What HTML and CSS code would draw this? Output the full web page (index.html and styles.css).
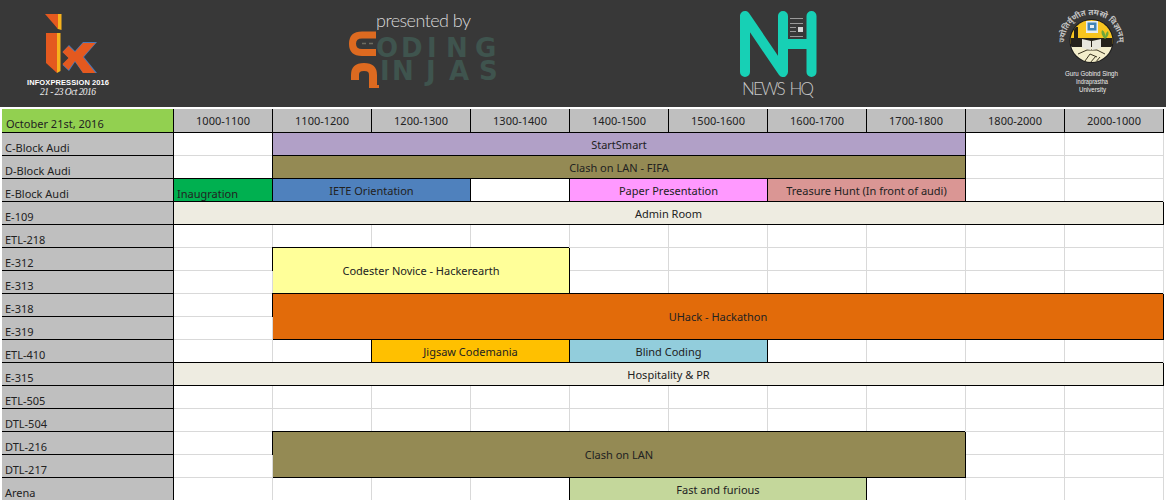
FILE: index.html
```html
<!DOCTYPE html>
<html lang="en">
<head>
    <meta charset="UTF-8">
    <meta name="viewport" content="width=device-width, initial-scale=1.0">
    <title>Infoxpression 2016 Schedule</title>
    <link rel="stylesheet" href="styles.css">
</head>
<body>

    <!-- Sponsor logos -->
    <header class="logo-bar">
        <svg class="logo logo-ix" viewBox="26 0 84 107" role="img" aria-label="Infoxpression">
            <polygon class="ix-gold" points="48,14 61.500,14 61.500,30 58,29"/>
            <polygon class="ix-orange" points="45,14 58,14 58,29"/>
            <polygon class="ix-gold" points="57,33 60.500,33 60.500,71 57,73"/>
            <polygon class="ix-orange" points="46,33 57,33 57,73 46,63"/>
            <polygon class="ix-blue" points="83,42 97,42 84,57 97,73 83,73 75,62 69,71 62.500,65 69,58 62.500,52 69,45 75,51"/>
            <polygon class="ix-orange" points="83,43 95.500,43 83,57 95.500,73 83,73 75,61 68.500,70 62.500,64 68.500,58 62.500,52 68.500,46 75,52"/>
            <text class="ix-title" x="27" y="85" textLength="82">INFOXPRESSION 2016</text>
            <text class="ix-date" x="40" y="95" textLength="56">21 - 23 Oct 2016</text>
        </svg>

        <svg class="logo logo-cn" viewBox="349 0 152 107" role="img" aria-label="Coding Ninjas">
            <text class="cn-by" x="377" y="27" textLength="95">presented by</text>
            <path class="cn-hook" d="M377 35 H363 Q353.500 35 353.500 43.750 Q353.500 52.500 363 52.500 H377"/>
            <path class="cn-eyes" d="M363 43.500 H367 M370 43.500 H374"/>
            <path class="cn-hook wide" d="M356 80 V75 Q356 67 365 67 Q374 67 374 75 V87"/>
            <rect class="cn-foot" x="370" y="85" width="10" height="3"/>
            <text class="cn-word" x="377 402 428 447 476" y="57">ODING</text>
            <text class="cn-word" x="381 393 427 450 480" y="80">INJAS</text>
        </svg>

        <svg class="logo logo-nh" viewBox="740 0 82 107" role="img" aria-label="News HQ">
            <path class="nh-stroke" d="M747 16 V72 M747 16 L785 72 V16 M813.500 16 V72 M785 44 H813.500"/>
            <path class="nh-lines" d="M792 18.500 H805 M792 23.500 H805 M792 27.500 H798 M792 31.500 H798 M792 36.500 H805"/>
            <rect class="nh-photo" x="800" y="27" width="5" height="5"/>
            <text class="nh-name" x="744" y="95" textLength="72">NEWS HQ</text>
        </svg>

        <svg class="logo logo-ipu" viewBox="1058 0 66 107" role="img" aria-label="Guru Gobind Singh Indraprastha University">
            <defs>
                <clipPath id="sealClip"><circle cx="1091.500" cy="41" r="21"/></clipPath>
                <path id="mottoArc" d="M1065 47 A27 27 0 1 1 1118 47"/>
            </defs>
            <text class="ipu-motto"><textPath href="#mottoArc" startOffset="50%">ज्योतिर्वृणीत तमसो विज्ञानम्</textPath></text>
            <circle cx="1091.500" cy="41" r="22" class="ipu-edge"/>
            <g clip-path="url(#sealClip)">
                <rect class="ipu-yellow" x="1068" y="18" width="47" height="26"/>
                <rect class="ipu-cream" x="1068" y="46" width="47" height="18"/>
                <rect class="ipu-black" x="1068" y="38" width="47" height="9"/>
                <rect class="ipu-black" x="1074" y="27" width="4" height="12"/>
                <path class="ipu-leaf" d="M1105 39 Q1100 34 1102 30 Q1106 32 1105 39 Q1105 33 1108 31 Q1110 35 1105 39 Z"/>
                <path class="ipu-hands" d="M1078 54 L1087 50 L1097 50 L1105 54 M1085 61 L1090 54 L1097 57 M1090 63 L1096 56 M1095 63 L1100 57"/>
            </g>
            <rect class="ipu-white" x="1086" y="21" width="12" height="12"/>
            <rect class="ipu-screen" x="1087.500" y="22.500" width="9" height="8"/>
            <rect class="ipu-white" x="1090" y="25" width="4" height="3"/>
            <path class="ipu-book" d="M1082 39 L1091 41 V50 L1082 48 Z M1092 41 L1101 39 V48 L1092 50 Z"/>
            <text class="ipu-name" x="1065" y="76" textLength="53" lengthAdjust="spacingAndGlyphs">Guru Gobind Singh</text>
            <text class="ipu-name" x="1076" y="84" textLength="32" lengthAdjust="spacingAndGlyphs">Indraprastha</text>
            <text class="ipu-name" x="1079" y="92" textLength="27" lengthAdjust="spacingAndGlyphs">University</text>
        </svg>
    </header>

    <!-- Schedule sheet -->
    <main class="sheet">
        <div class="date-cell">October 21st, 2016</div>
        <div class="time-cell">1000-1100</div>
        <div class="time-cell">1100-1200</div>
        <div class="time-cell">1200-1300</div>
        <div class="time-cell">1300-1400</div>
        <div class="time-cell">1400-1500</div>
        <div class="time-cell">1500-1600</div>
        <div class="time-cell">1600-1700</div>
        <div class="time-cell">1700-1800</div>
        <div class="time-cell">1800-2000</div>
        <div class="time-cell">2000-1000</div>

        <div class="room">C-Block Audi</div>
        <div class="empty"></div>
        <div class="event cols-7 purple">StartSmart</div>
        <div class="empty"></div><div class="empty"></div>

        <div class="room">D-Block Audi</div>
        <div class="empty"></div>
        <div class="event cols-7 olive">Clash on LAN - FIFA</div>
        <div class="empty"></div><div class="empty"></div>

        <div class="room">E-Block Audi</div>
        <div class="event low green">Inaugration</div>
        <div class="event cols-2 blue">IETE Orientation</div>
        <div class="empty boxed"></div>
        <div class="event cols-2 pink">Paper Presentation</div>
        <div class="event cols-2 salmon">Treasure Hunt (In front of audi)</div>
        <div class="empty"></div><div class="empty"></div>

        <div class="room">E-109</div>
        <div class="event cols-10 cream">Admin Room</div>

        <div class="room">ETL-218</div>
        <div class="empty"></div><div class="empty"></div><div class="empty"></div><div class="empty"></div><div class="empty"></div>
        <div class="empty"></div><div class="empty"></div><div class="empty"></div><div class="empty"></div><div class="empty"></div>

        <div class="room">E-312</div>
        <div class="empty"></div>
        <div class="event cols-3 rows-2 yellow">Codester Novice - Hackerearth</div>
        <div class="empty"></div><div class="empty"></div><div class="empty"></div><div class="empty"></div><div class="empty"></div><div class="empty"></div>

        <div class="room">E-313</div>
        <div class="empty"></div>
        <div class="empty"></div><div class="empty"></div><div class="empty"></div><div class="empty"></div><div class="empty"></div><div class="empty"></div>

        <div class="room">E-318</div>
        <div class="empty"></div>
        <div class="event cols-9 rows-2 orange">UHack - Hackathon</div>

        <div class="room">E-319</div>
        <div class="empty"></div>

        <div class="room">ETL-410</div>
        <div class="empty"></div><div class="empty"></div>
        <div class="event cols-2 gold">Jigsaw Codemania</div>
        <div class="event cols-2 sky">Blind Coding</div>
        <div class="empty"></div><div class="empty"></div><div class="empty"></div><div class="empty"></div>

        <div class="room">E-315</div>
        <div class="event cols-10 cream">Hospitality &amp; PR</div>

        <div class="room">ETL-505</div>
        <div class="empty"></div><div class="empty"></div><div class="empty"></div><div class="empty"></div><div class="empty"></div>
        <div class="empty"></div><div class="empty"></div><div class="empty"></div><div class="empty"></div><div class="empty"></div>

        <div class="room">DTL-504</div>
        <div class="empty"></div><div class="empty"></div><div class="empty"></div><div class="empty"></div><div class="empty"></div>
        <div class="empty"></div><div class="empty"></div><div class="empty"></div><div class="empty"></div><div class="empty"></div>

        <div class="room">DTL-216</div>
        <div class="empty"></div>
        <div class="event cols-7 rows-2 olive">Clash on LAN</div>
        <div class="empty"></div><div class="empty"></div>

        <div class="room">DTL-217</div>
        <div class="empty"></div>
        <div class="empty"></div><div class="empty"></div>

        <div class="room">Arena</div>
        <div class="empty"></div><div class="empty"></div><div class="empty"></div><div class="empty"></div>
        <div class="event cols-3 leaf">Fast and furious</div>
        <div class="empty"></div><div class="empty"></div><div class="empty"></div>
    </main>

</body>
</html>
```

FILE: styles.css
```css
body {
    margin: 0;
    height: 500px;
    overflow: hidden;
    background-color: #fff;
    font-family: "Noto Sans", Arial, sans-serif;
    font-size: 11px;
    color: #222;
}

/* Logo bar */
.logo-bar {
    display: flex;
    justify-content: space-between;
    height: 107px;
    padding: 0 42px 0 26px;
    background-color: #383838;
}

.logo {
    display: block;
    height: 107px;
}

.logo-ix { width: 84px; }
.logo-cn { width: 152px; }
.logo-nh { width: 82px; }
.logo-ipu { width: 66px; }

.ix-orange { fill: #e4591f; }
.ix-gold { fill: #f7b21c; }
.ix-blue { fill: #4a78b8; }

.ix-title {
    fill: #fff;
    font-family: "Liberation Sans", sans-serif;
    font-size: 7.5px;
    font-weight: bold;
}

.ix-date {
    fill: #eee;
    font-family: "Liberation Serif", serif;
    font-size: 9.5px;
    font-style: italic;
}

.cn-by {
    fill: #d8d8d8;
    font-family: Lato, sans-serif;
    font-size: 18px;
    font-weight: 300;
}

.cn-hook {
    fill: none;
    stroke: #dd6a20;
    stroke-width: 7;
}

.cn-hook.wide { stroke-width: 8; }

.cn-eyes {
    fill: none;
    stroke: #6d6d62;
    stroke-width: 1.5;
}

.cn-foot { fill: #dd6a20; }

.cn-word {
    fill: #3f544e;
    font-family: "DejaVu Sans", sans-serif;
    font-size: 26px;
    font-weight: bold;
}

.nh-stroke {
    fill: none;
    stroke: #17d0b5;
    stroke-width: 10;
    stroke-linecap: round;
    stroke-linejoin: round;
}

.nh-lines {
    fill: none;
    stroke: #9a9a9a;
    stroke-width: 1;
}

.nh-photo { fill: #d4d4d4; }

.nh-name {
    fill: #c8c8c8;
    font-family: Lato, sans-serif;
    font-size: 17px;
    font-weight: 300;
    word-spacing: 3px;
}

.ipu-motto {
    fill: #c4c4c4;
    font-family: "Noto Sans", sans-serif;
    font-size: 8px;
    font-weight: bold;
    text-anchor: middle;
}

.ipu-edge { fill: #1b1b1b; }
.ipu-yellow { fill: #f8c51f; }
.ipu-cream { fill: #f4eecb; }
.ipu-black { fill: #26221a; }
.ipu-white { fill: #e8eef0; }
.ipu-screen { fill: #3f84b5; }
.ipu-leaf { fill: #6fa63a; }
.ipu-book { fill: #e8e6dc; }

.ipu-hands {
    fill: none;
    stroke: #3a3320;
    stroke-width: 1;
}

.ipu-name {
    fill: #eee;
    font-family: "Liberation Sans", sans-serif;
    font-size: 7px;
}

/* Schedule sheet */
.sheet {
    display: grid;
    grid-template-columns: 172px repeat(10, 99px);
    grid-template-rows: 24px;
    grid-auto-rows: 23px;
    margin: 2px 0 0 2px;
}

.sheet > div {
    box-sizing: border-box;
    white-space: nowrap;
}

.date-cell {
    display: flex;
    align-items: flex-end;
    padding: 0 4px 1px;
    background-color: #92d050;
    border-right: 1px solid #000;
    border-bottom: 1px solid #000;
}

.time-cell {
    display: flex;
    align-items: center;
    justify-content: center;
    background-color: #bfbfbf;
    border-right: 1px solid #000;
    border-bottom: 1px solid #000;
}

.room {
    display: flex;
    align-items: flex-end;
    padding: 0 3px;
    background-color: #bfbfbf;
    border-right: 1px solid #000;
    border-bottom: 1px solid #000;
}

.empty {
    border-right: 1px solid #d9d9d9;
    border-bottom: 1px solid #d9d9d9;
}

.empty.boxed { border-bottom-color: #000; }

.event {
    display: flex;
    align-items: center;
    justify-content: center;
    border-right: 1px solid #000;
    border-bottom: 1px solid #000;
    box-shadow: -1px -1px 0 #000;
}

.event.low {
    align-items: flex-end;
    justify-content: flex-start;
    padding: 0 0 0 3px;
}

.cols-2 { grid-column: span 2; }
.cols-3 { grid-column: span 3; }
.cols-7 { grid-column: span 7; }
.cols-9 { grid-column: span 9; }
.cols-10 { grid-column: span 10; }
.rows-2 { grid-row: span 2; }

.purple { background-color: #b1a0c7; }
.olive { background-color: #948a54; }
.green { background-color: #00b050; }
.blue { background-color: #4f81bd; }
.pink { background-color: #ff99ff; }
.salmon { background-color: #da9694; }
.cream { background-color: #eeece1; }
.yellow { background-color: #ffff99; }
.orange { background-color: #e26b0a; }
.gold { background-color: #ffc000; }
.sky { background-color: #92cddc; }
.leaf { background-color: #c4d79b; }
```
